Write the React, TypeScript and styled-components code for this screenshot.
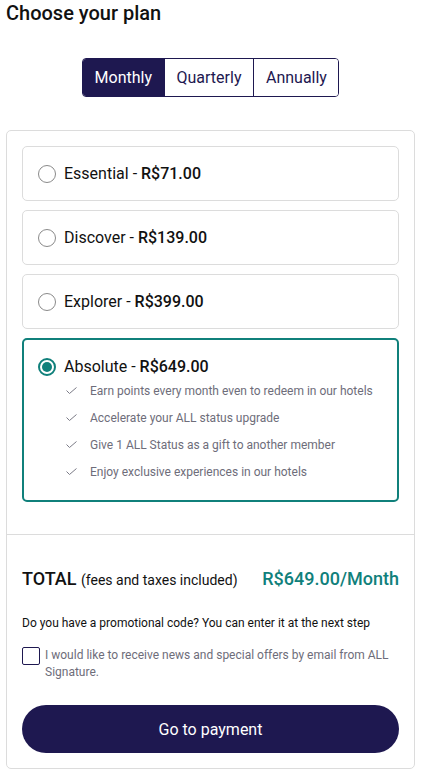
import styled, { createGlobalStyle } from "styled-components";

const navy = "#1e1850";
const teal = "#10807b";
const line = "#dcdcdc";

const GlobalStyle = createGlobalStyle`
  body {
    margin: 0;
    background: #fff;
    font-family: Roboto, "Liberation Sans", sans-serif;
    color: #111;
  }
`;

const Page = styled.div`
  padding: 1px 6px 5px;
`;

const Title = styled.h1`
  margin: 0;
  font-size: 20px;
  font-weight: 500;
  color: #111;
`;

const Tabs = styled.div`
  display: flex;
  justify-content: center;
  margin: 33px 0 33px;
`;

const TabGroup = styled.div`
  display: flex;
  border: 1px solid ${navy};
  border-radius: 4px;
  overflow: hidden;
`;

const Tab = styled.button<{ active?: boolean }>`
  font-family: inherit;
  font-size: 16px;
  height: 37px;
  padding: 0 11.5px 0 12px;
  border: none;
  border-left: 1px solid ${navy};
  background: ${(p) => (p.active ? navy : "#fff")};
  color: ${(p) => (p.active ? "#fff" : navy)};
  font-weight: 400;
  &:first-child {
    border-left: none;
  }
`;

const Card = styled.div`
  border: 1px solid ${line};
  border-radius: 5px;
`;

const Plans = styled.div`
  display: flex;
  flex-direction: column;
  gap: 9px;
  padding: 15px 15px 32px;
  border-bottom: 1px solid ${line};
`;

const Plan = styled.div<{ selected?: boolean }>`
  border: ${(p) => (p.selected ? `2px solid ${teal}` : `1px solid ${line}`)};
  border-radius: 5px;
  padding: ${(p) => (p.selected ? "17px 14px 15px" : "17px 15px")};
`;

const PlanHead = styled.div`
  display: flex;
  align-items: center;
  gap: 8px;
  font-size: 16px;
  line-height: 19px;
`;

const Radio = styled.span<{ checked?: boolean }>`
  box-sizing: border-box;
  width: 18px;
  height: 18px;
  border-radius: 50%;
  border: ${(p) => (p.checked ? `2px solid ${teal}` : "1.5px solid #8a8a8a")};
  display: flex;
  align-items: center;
  justify-content: center;
  flex-shrink: 0;
  &::after {
    content: "";
    display: ${(p) => (p.checked ? "block" : "none")};
    width: 10px;
    height: 10px;
    border-radius: 50%;
    background: ${teal};
  }
`;

const Price = styled.b`
  font-weight: 500;
`;

const Features = styled.ul`
  list-style: none;
  margin: 1px 0 0;
  padding: 0 0 0 28px;
`;

const Feature = styled.li`
  display: flex;
  align-items: center;
  gap: 13px;
  height: 27px;
  font-size: 12px;
  color: #6e6d7a;
`;

const Summary = styled.div`
  padding: 33px 15px 15px;
`;

const TotalRow = styled.div`
  display: flex;
  justify-content: space-between;
  align-items: baseline;
`;

const TotalLabel = styled.span`
  font-size: 18px;
  font-weight: 500;
  color: #111;
  span {
    font-size: 14px;
    font-weight: 400;
  }
`;

const TotalPrice = styled.span`
  font-size: 18px;
  font-weight: 500;
  color: ${teal};
`;

const Promo = styled.p`
  margin: 27px 0 0;
  font-size: 12px;
  color: #111;
`;

const Consent = styled.label`
  display: flex;
  gap: 5px;
  margin-top: 17px;
  font-size: 12px;
  line-height: 17px;
  color: #6e6d7a;
`;

const Box = styled.span`
  box-sizing: border-box;
  width: 18px;
  height: 18px;
  border: 1.5px solid ${navy};
  border-radius: 2px;
  flex-shrink: 0;
`;

const PayButton = styled.button`
  display: block;
  width: 100%;
  height: 48px;
  margin-top: 24px;
  border: none;
  border-radius: 24px;
  background: ${navy};
  color: #fff;
  font-family: inherit;
  font-size: 16px;
  font-weight: 400;
`;

const Check = () => (
  <svg width="11" height="7" viewBox="0 0 11 7" fill="none">
    <path d="M0.5 3.5 L3.5 6.5 L10.5 0.5" stroke="#7a7a86" strokeWidth="1" />
  </svg>
);

const plans = [
  { name: "Essential", price: "R$71.00" },
  { name: "Discover", price: "R$139.00" },
  { name: "Explorer", price: "R$399.00" },
  { name: "Absolute", price: "R$649.00" },
];

const features = [
  "Earn points every month even to redeem in our hotels",
  "Accelerate your ALL status upgrade",
  "Give 1 ALL Status as a gift to another member",
  "Enjoy exclusive experiences in our hotels",
];

export default function App() {
  const selected = "Absolute";
  return (
    <Page>
      <GlobalStyle />
      <Title>Choose your plan</Title>
      <Tabs>
        <TabGroup>
          <Tab active>Monthly</Tab>
          <Tab>Quarterly</Tab>
          <Tab>Annually</Tab>
        </TabGroup>
      </Tabs>
      <Card>
        <Plans>
          {plans.map((p) => {
            const on = p.name === selected;
            return (
              <Plan key={p.name} selected={on}>
                <PlanHead>
                  <Radio checked={on} />
                  <span>
                    {p.name} - <Price>{p.price}</Price>
                  </span>
                </PlanHead>
                {on && (
                  <Features>
                    {features.map((f) => (
                      <Feature key={f}>
                        <Check />
                        {f}
                      </Feature>
                    ))}
                  </Features>
                )}
              </Plan>
            );
          })}
        </Plans>
        <Summary>
          <TotalRow>
            <TotalLabel>
              TOTAL <span>(fees and taxes included)</span>
            </TotalLabel>
            <TotalPrice>R$649.00/Month</TotalPrice>
          </TotalRow>
          <Promo>Do you have a promotional code? You can enter it at the next step</Promo>
          <Consent>
            <Box />
            I would like to receive news and special offers by email from ALL Signature.
          </Consent>
          <PayButton>Go to payment</PayButton>
        </Summary>
      </Card>
    </Page>
  );
}
